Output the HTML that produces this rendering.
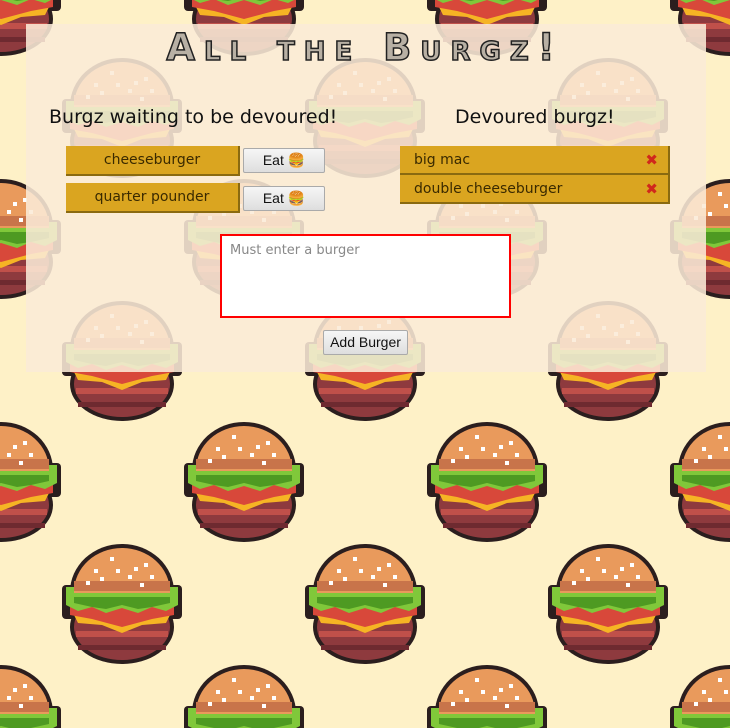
<!DOCTYPE html>
<html><head><style>
html,body{margin:0;padding:0;width:730px;height:728px;overflow:hidden;background:#fef1c7;font-family:"DejaVu Sans","Liberation Sans",sans-serif;}
#bg{position:absolute;left:0;top:0;}
#panel{position:absolute;left:26px;top:24px;width:680px;height:348px;background:rgba(250,235,215,0.88);}
.t{position:absolute;color:#111;white-space:nowrap;}
h1{position:absolute;left:0;width:730px;top:26px;margin:0;text-align:center;font-size:37px;letter-spacing:9px;font-weight:bold;color:#b8b0a4;-webkit-text-stroke:1.5px #222;font-variant:small-caps;font-family:"DejaVu Sans",sans-serif;}
.item{position:absolute;background:#daa520;border-right:2px solid #8a6a10;border-bottom:2px solid #8a6a10;box-sizing:border-box;font-size:14px;color:#3a2a00;}
.btn{position:absolute;background:linear-gradient(#f6f6f6,#dedede);border:1px solid #aaa;box-sizing:border-box;border-radius:2px;font-size:14px;color:#111;text-align:center;font-family:"Liberation Sans",sans-serif;}
.x{position:absolute;right:10px;color:#d0281c;font-size:15px;font-weight:bold;}
</style></head><body>
<svg id="bg" width="730" height="728">
<defs>
<clipPath id="top"><rect x="-70" y="-70" width="140" height="58"/></clipPath>
<g id="b">
<ellipse cx="0" cy="-13" rx="52" ry="48" fill="#2b1e1e"/>
<rect x="-60" y="-20" width="120" height="34" rx="4" fill="#2b1e1e"/>
<ellipse cx="0" cy="22" rx="52" ry="37" fill="#2b1e1e"/>
<ellipse cx="0" cy="22" rx="48" ry="33" fill="#8e3a3e"/>
<rect x="-46" y="26" width="92" height="6" fill="#c0504a"/>
<rect x="-44" y="40" width="88" height="5" fill="#6e2a30"/>
<path d="M-50 6 H50 L44 18 L20 20 L0 28 L-20 20 L-44 18 Z" fill="#f6b424"/>
<path d="M-52 2 H52 V10 L30 14 L0 22 L-30 14 L-52 10 Z" fill="#d8483a"/>
<path d="M-56 -18 H56 V0 L44 6 L30 2 L16 8 L0 3 L-16 8 L-30 2 L-44 6 L-56 0 Z" fill="#80c83a"/>
<path d="M-48 -8 H48 V-2 L30 2 L16 4 L0 0 L-16 4 L-30 2 L-48 -2Z" fill="#4e9a22"/>
<ellipse cx="0" cy="-13" rx="48" ry="44" fill="#e99a5c" clip-path="url(#top)"/>
<rect x="-48" y="-24" width="96" height="10" fill="#c8744a"/>
<g fill="#fff">
<rect x="-12" y="-48" width="4" height="4"/><rect x="22" y="-42" width="4" height="4"/><rect x="-28" y="-36" width="4" height="4"/><rect x="-6" y="-36" width="4" height="4"/><rect x="12" y="-38" width="4" height="4"/><rect x="-22" y="-28" width="4" height="4"/><rect x="6" y="-30" width="4" height="4"/><rect x="28" y="-30" width="4" height="4"/><rect x="-36" y="-24" width="4" height="4"/><rect x="18" y="-22" width="4" height="4"/>
</g>
</g>
<pattern id="p" x="123" y="119" width="243" height="243" patternUnits="userSpaceOnUse">
<use href="#b" x="121" y="121"/>
<use href="#b" x="-1" y="0"/><use href="#b" x="242" y="0"/><use href="#b" x="-1" y="243"/><use href="#b" x="242" y="243"/>
</pattern>
</defs>
<rect width="730" height="728" fill="url(#p)"/>
</svg>
<div id="panel"></div>
<h1>All the Burgz!</h1>
<div class="t" style="left:49px;top:106px;font-size:19px;">Burgz waiting to be devoured!</div>
<div class="t" style="left:455px;top:106px;font-size:19px;">Devoured burgz!</div>
<div class="item" style="left:66px;top:146px;width:174px;height:30px;line-height:29px;text-align:center;">cheeseburger</div>
<div class="btn" style="left:243px;top:148px;width:82px;height:25px;line-height:23px;">Eat 🍔</div>
<div class="item" style="left:66px;top:183px;width:174px;height:30px;line-height:29px;text-align:center;">quarter pounder</div>
<div class="btn" style="left:243px;top:186px;width:82px;height:25px;line-height:23px;">Eat 🍔</div>
<div class="item" style="left:400px;top:146px;width:270px;height:29px;line-height:28px;padding-left:14px;">big mac<span class="x">✖</span></div>
<div class="item" style="left:400px;top:175px;width:270px;height:29px;line-height:28px;padding-left:14px;">double cheeseburger<span class="x">✖</span></div>
<div style="position:absolute;left:220px;top:234px;width:291px;height:84px;box-sizing:border-box;border:2px solid #f00;background:#fff;"></div>
<div class="t" style="left:230px;top:243px;font-size:13px;color:#888;">Must enter a burger</div>
<div class="btn" style="left:323px;top:330px;width:85px;height:25px;line-height:23px;">Add Burger</div>
</body></html>
